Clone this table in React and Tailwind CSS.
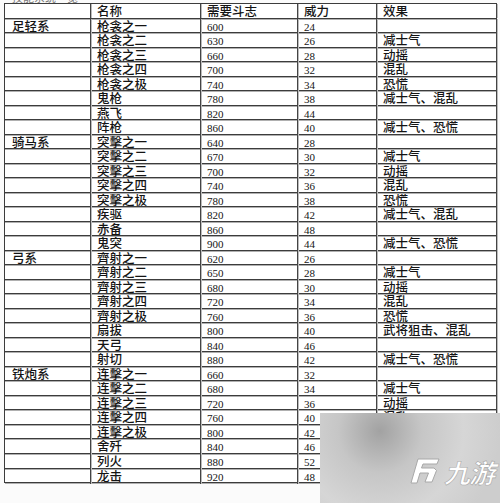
import React from "react";

const groups = [
  {
    name: "足轻系",
    rows: [
      ["枪衾之一", "600", "24", ""],
      ["枪衾之二", "630", "26", "减士气"],
      ["枪衾之三", "660", "28", "动摇"],
      ["枪衾之四", "700", "32", "混乱"],
      ["枪衾之极", "740", "34", "恐慌"],
      ["鬼枪", "780", "38", "减士气、混乱"],
      ["燕飞", "820", "44", ""],
      ["阵枪", "860", "40", "减士气、恐慌"],
    ],
  },
  {
    name: "骑马系",
    rows: [
      ["突擊之一", "640", "28", ""],
      ["突擊之二", "670", "30", "减士气"],
      ["突擊之三", "700", "32", "动摇"],
      ["突擊之四", "740", "36", "混乱"],
      ["突擊之极", "780", "38", "恐慌"],
      ["疾驱", "820", "42", "减士气、混乱"],
      ["赤备", "860", "48", ""],
      ["鬼突", "900", "44", "减士气、恐慌"],
    ],
  },
  {
    name: "弓系",
    rows: [
      ["齊射之一", "620", "26", ""],
      ["齊射之二", "650", "28", "减士气"],
      ["齊射之三", "680", "30", "动摇"],
      ["齊射之四", "720", "34", "混乱"],
      ["齊射之极", "760", "36", "恐慌"],
      ["扇拔", "800", "40", "武将狙击、混乱"],
      ["天弓", "840", "46", ""],
      ["射切", "880", "42", "减士气、恐慌"],
    ],
  },
  {
    name: "铁炮系",
    rows: [
      ["连擊之一", "660", "32", ""],
      ["连擊之二", "680", "34", "减士气"],
      ["连擊之三", "720", "36", "动摇"],
      ["连擊之四", "760", "40", "混乱"],
      ["连擊之极", "800", "42", "恐慌"],
      ["舍歼", "840", "46", ""],
      ["列火", "880", "52", ""],
      ["龙击", "920", "48", ""],
    ],
  },
];

const cjk = { fontFamily: '"Noto Sans CJK SC", sans-serif' };
const num = { fontFamily: '"Liberation Serif", serif' };

function Row({ cells, header }) {
  return (
    <div className="grid grid-cols-[86px_110px_97px_79px_120px] h-[14.53px] border-b border-[#3c3c3c] shadow-[0_1px_0_#b0b0b0]">
      {cells.map((c, i) => {
        const isNum = !header && (i === 2 || i === 3);
        return (
          <div
            key={i}
            className={`border-r border-[#444] shadow-[1px_0_0_#bbb] whitespace-nowrap text-[#141414] ${
              i === 0 ? "pl-[7px]" : "pl-[6px]"
            } ${isNum ? "text-[11px] leading-[14px] pt-[1px]" : "text-[12.5px] leading-[14px] font-medium"}`}
            style={isNum ? num : cjk}
          >
            {c}
          </div>
        );
      })}
    </div>
  );
}

function Watermark() {
  return (
    <svg width="180" height="90" viewBox="0 0 180 90" className="block">
      <defs>
        <radialGradient id="wmg" cx="60" cy="18" r="120" gradientUnits="userSpaceOnUse">
          <stop offset="0" stopColor="#a2a2a2" />
          <stop offset="0.35" stopColor="#c6c6c6" />
          <stop offset="0.7" stopColor="#d6d6d6" />
          <stop offset="1" stopColor="#cdcdcd" />
        </radialGradient>
      </defs>
      <rect x="0" y="0" width="180" height="90" fill="#cfcfcf" />
      <rect x="0" y="0" width="180" height="90" fill="url(#wmg)" />
      <g transform="translate(88 44)">
        <path
          d="M10 2 L31 2 L29 7 L15 7 L13.5 11 L26 11 L28.5 13.5 L24 25 L17 25 L20.5 16 L12 16 L9 26 L3 26 Z"
          fill="#ffffff"
          stroke="#a8a8a8"
          strokeWidth="1"
          strokeLinejoin="round"
        />
      </g>
      <text
        x="124"
        y="70"
        fontSize="26"
        fontStyle="italic"
        fontWeight="700"
        fill="#ffffff"
        stroke="#a8a8a8"
        strokeWidth="0.6"
        letterSpacing="-1"
        style={{ fontFamily: '"Noto Sans CJK SC", sans-serif' }}
      >
        九游
      </text>
    </svg>
  );
}

export default function App() {
  const rows = [];
  groups.forEach((g) => {
    g.rows.forEach((r, idx) => {
      rows.push([idx === 0 ? g.name : "", ...r]);
    });
  });
  return (
    <div className="grid w-[500px] h-[503px] bg-[#fbfbfb] overflow-hidden">
      <div className="col-start-1 row-start-1">
        <div className="h-[3px] overflow-hidden pl-[12px]">
          <div className="text-[11px] leading-none -mt-[8px] text-[#777]" style={cjk}>
            技能系统一览
          </div>
        </div>
        <div className="ml-[4px] w-[493px] border-t border-l border-[#3c3c3c] bg-white">
          <Row header cells={["", "名称", "需要斗志", "威力", "效果"]} />
          {rows.map((r, i) => (
            <Row key={i} cells={r} />
          ))}
        </div>
      </div>
      <div className="col-start-1 row-start-1 self-end justify-self-end z-10">
        <Watermark />
      </div>
    </div>
  );
}
